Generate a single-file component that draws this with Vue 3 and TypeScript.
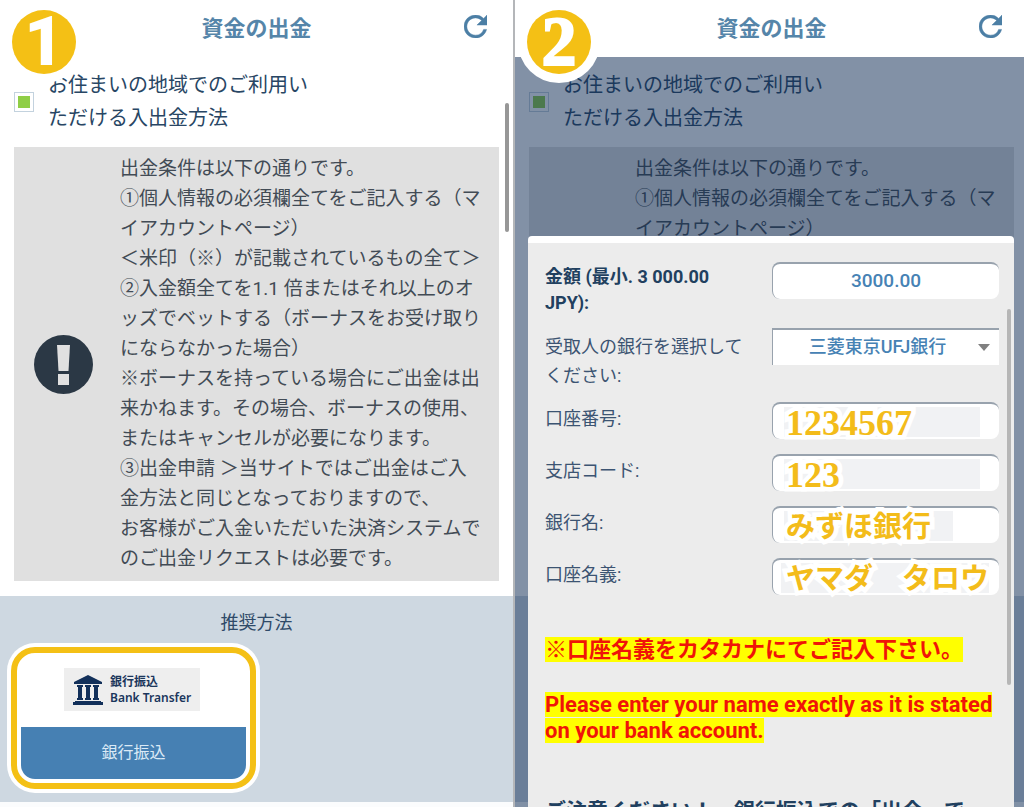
<script setup lang="ts">
import { ref } from 'vue'

interface Field {
  id: string
  label: string
  note: string
  digits: boolean
  maskStart: number
  maskWidth: number
}

const conditions: string[] = [
  '出金条件は以下の通りです。',
  '①個人情報の必須欄全てをご記入する（マ',
  'イアカウントページ）',
  '＜米印（※）が記載されているもの全て＞',
  '②入金額全てを1.1 倍またはそれ以上のオ',
  'ッズでベットする（ボーナスをお受け取り',
  'にならなかった場合）',
  '※ボーナスを持っている場合にご出金は出',
  '来かねます。その場合、ボーナスの使用、',
  'またはキャンセルが必要になります。',
  '③出金申請 ＞当サイトではご出金はご入',
  '金方法と同じとなっておりますので、',
  'お客様がご入金いただいた決済システムで',
  'のご出金リクエストは必要です。',
]

const screens = [
  { step: 1, dialog: false, lines: conditions },
  { step: 2, dialog: true, lines: conditions.slice(0, 3) },
]
const available = ref(true)
const amount = ref('3000.00')
const bank = ref('三菱東京UFJ銀行')

const fields: Field[] = [
  { id: 'account', label: '口座番号:', note: '1234567', digits: true, maskStart: 12, maskWidth: 196 },
  { id: 'branch', label: '支店コード:', note: '123', digits: true, maskStart: 12, maskWidth: 196 },
  { id: 'bankname', label: '銀行名:', note: 'みずほ銀行', digits: false, maskStart: 12, maskWidth: 169 },
  { id: 'holder', label: '口座名義:', note: 'ヤマダ　タロウ', digits: false, maskStart: 9, maskWidth: 208 },
]
</script>

<template>
  <main class="page">
    <section v-for="s in screens" :key="s.step" class="screen">
      <header class="bar">
        <h1>資金の出金</h1>
        <button class="reload" type="button" aria-label="更新">
          <svg viewBox="4 4 16 16" width="23" height="23" aria-hidden="true">
            <path fill="currentColor" stroke="currentColor" stroke-width="0.300" d="M17.65 6.35A7.958 7.958 0 0 0 12 4c-4.42 0-7.99 3.58-7.99 8s3.57 8 7.99 8c3.73 0 6.84-2.55 7.73-6h-2.08A5.99 5.99 0 0 1 12 18c-3.31 0-6-2.69-6-6s2.69-6 6-6c1.66 0 3.14.69 4.22 1.78L13 11h7V4z" />
          </svg>
        </button>
      </header>

      <div class="content">
        <div class="region">
          <input :id="'region' + s.step" v-model="available" type="checkbox" />
          <label :for="'region' + s.step">お住まいの地域でのご利用い<br />ただける入出金方法</label>
        </div>
        <div class="notice">
          <div class="alert">
            <svg v-if="!s.dialog" viewBox="0 0 59 59" width="59" height="59" aria-hidden="true">
              <circle cx="29.500" cy="29.500" r="29.500" fill="#2b3845" />
              <path d="M23 10h13l-1.500 26h-10z" fill="#e0e0e0" />
              <path d="M24 39h11v11h-11z" fill="#e0e0e0" />
            </svg>
          </div>
          <p>
            <span v-for="line in s.lines" :key="line">{{ line }}</span>
          </p>
        </div>
      </div>

      <footer class="methods">
        <template v-if="!s.dialog">
          <h2>推奨方法</h2>
          <button class="method" type="button">
            <span class="brand">
              <svg viewBox="0 0 30 30" width="30" height="30" aria-hidden="true">
                <g fill="#12305a">
                  <path d="M15 0 29 7v2H1V7z" />
                  <path d="M4 10h6v2H9v11h1v2H4v-2h1V12H4z" />
                  <path d="M12 10h6v2h-1v11h1v2h-6v-2h1V12h-1z" />
                  <path d="M20 10h6v2h-1v11h1v2h-6v-2h1V12h-1z" />
                  <path d="M2 26h26v1h2v3H0v-3h2z" />
                </g>
              </svg>
              <span class="brand-text">
                <span>銀行振込</span>
                <span class="latin">Bank Transfer</span>
              </span>
            </span>
            <span class="method-name">銀行振込</span>
          </button>
        </template>
      </footer>

      <div v-if="!s.dialog" class="scroll page-scroll"></div>

      <div v-if="s.dialog" class="overlay">
        <form class="dialog" @submit.prevent>
          <div class="row">
            <label class="strong" for="amount">金額 (最小. 3 000.00 JPY):</label>
            <input id="amount" v-model="amount" class="control" type="text" />
          </div>
          <div class="row">
            <label class="wide" for="bank">受取人の銀行を選択してください:</label>
            <div class="cell">
              <select id="bank" v-model="bank" class="control">
                <option>三菱東京UFJ銀行</option>
              </select>
              <span class="arrow"></span>
            </div>
          </div>
          <div v-for="f in fields" :key="f.id" class="row">
            <label :for="f.id">{{ f.label }}</label>
            <div class="cell">
              <input :id="f.id" class="control" type="text" />
              <span class="mask" :style="{ left: f.maskStart + 'px', width: f.maskWidth + 'px' }"></span>
              <span class="note" :class="{ digits: f.digits }">{{ f.note }}</span>
            </div>
          </div>
          <p class="warn"><mark>※口座名義をカタカナにてご記入下さい。</mark></p>
          <p class="warn english"><mark>Please enter your name exactly as it is stated on your bank account.</mark></p>
          <p class="caution">ご注意ください！　銀行振込での「出金」で</p>
          <div class="scroll dialog-scroll"></div>
        </form>
      </div>

      <span class="badge" :class="{ serif: s.dialog }">{{ s.step }}</span>
    </section>
  </main>
</template>

<style>
body {
  margin: 0;
  overflow: hidden;
}
</style>

<style scoped>
* {
  box-sizing: border-box;
}
.page {
  display: grid;
  grid-template-columns: 1fr 1fr;
  width: calc(100% + 6px);
  min-height: 100vh;
  font-family: Roboto, "Noto Sans CJK JP", sans-serif;
  background: #fbfcfd;
}
.screen {
  position: relative;
  border-right: 2px solid #b4b6b9;
}
h1, h2, p {
  margin: 0;
}
button, input, select {
  font-family: inherit;
}
.bar {
  position: relative;
  display: flex;
  align-items: center;
  justify-content: center;
  height: 57px;
  background: #fff;
}
h1 {
  font-size: 22px;
  line-height: 30px;
  font-weight: 700;
  color: #5585a9;
}
.reload {
  position: absolute;
  top: 15px;
  right: 26px;
  padding: 0;
  border: 0;
  background: none;
  color: #4c7fa5;
  line-height: 0;
}
.content {
  padding: 12px 14px 15px;
  background: #fff;
}
.region {
  display: flex;
  align-items: center;
  gap: 14px;
  margin-bottom: 12px;
}
.region input {
  appearance: none;
  width: 20px;
  height: 20px;
  margin: 0;
  border: 1px solid #c3d2de;
  background: #fff;
}
.region input:checked {
  background: #8fce46;
  box-shadow: inset 0 0 0 3px #fff;
}
.region label {
  font-size: 20px;
  line-height: 33px;
  color: #284664;
}
.notice {
  display: flex;
  gap: 27px;
  min-height: 434px;
  padding: 7px 0 7px 20px;
  background: #e0e0e0;
}
.alert {
  display: flex;
  align-items: center;
  flex: none;
  width: 59px;
}
.notice p {
  font-size: 19px;
  line-height: 30px;
  color: #424b55;
  white-space: nowrap;
}
.notice p span {
  display: block;
}
.methods {
  display: flex;
  flex-direction: column;
  gap: 11px;
  min-height: 206px;
  padding: 14px 11px 13px;
  background: #ced8e1;
}
h2 {
  font-size: 18px;
  line-height: 26px;
  font-weight: 400;
  text-align: center;
  color: #2f4a68;
}
.method {
  display: flex;
  flex-direction: column;
  align-items: center;
  gap: 16px;
  width: 245px;
  padding: 15px 4px 4px;
  border: 6px solid #f4c015;
  border-radius: 24px;
  box-shadow: 0 0 0 4px #fff;
  background: #fff;
}
.brand {
  display: flex;
  align-items: center;
  gap: 7px;
  width: 136px;
  height: 43px;
  padding-left: 9px;
  margin-right: 3px;
  background: #eee;
}
.brand-text {
  display: flex;
  flex-direction: column;
  font-size: 12px;
  line-height: 15px;
  font-weight: 700;
  text-align: left;
  white-space: nowrap;
  color: #1b365c;
}
.latin {
  font-family: "Noto Sans", sans-serif;
  font-weight: 600;
}
.method-name {
  align-self: stretch;
  border-radius: 0 0 14px 14px;
  background: #4680b3;
  color: #dceaf6;
  font-size: 16px;
  line-height: 52px;
}
.scroll {
  position: absolute;
  width: 4px;
  border-radius: 2px;
  background: #979797;
}
.page-scroll {
  top: 103px;
  right: 4px;
  height: 129px;
}
.overlay {
  position: absolute;
  inset: 57px 0 0;
  padding: 179px 14px 0 13px;
  overflow: hidden;
  background: rgba(16, 45, 84, 0.52);
}
.dialog {
  position: relative;
  padding: 19px 15px 40px 17px;
  border-top: 7px solid #fff;
  border-radius: 4px;
  background: #ececec;
}
.row {
  display: grid;
  grid-template-columns: 1fr 227px;
  align-items: start;
  min-height: 40px;
  margin-bottom: 12px;
}
.row label {
  padding: 2px 26px 0 0;
  font-size: 18px;
  line-height: 29px;
  color: #3c5472;
}
.row .wide {
  padding: 4px 26px 0 0;
}
.row .strong {
  padding: 2px 60px 0 0;
  font-weight: 700;
  line-height: 26px;
  color: #21405f;
}
.cell {
  position: relative;
}
.control {
  display: block;
  width: 100%;
  height: 37px;
  padding: 0 0 2px;
  border: 0 solid #98a2ad;
  border-width: 2px 0 0 1px;
  border-radius: 8px;
  outline: 0;
  background: #fff;
  color: #4682b4;
  font-size: 19px;
  font-weight: 500;
  text-align: center;
}
select.control {
  appearance: none;
  padding-right: 17px;
  border-radius: 0;
  font-size: 18px;
  text-align-last: center;
}
.arrow {
  position: absolute;
  top: 16px;
  right: 9px;
  border: 6px solid transparent;
  border-top: 7px solid #808080;
  border-bottom: 0;
  pointer-events: none;
}
.mask {
  position: absolute;
  top: 5px;
  bottom: 2px;
  background: #f1f2f4;
}
.note {
  position: absolute;
  top: 2px;
  left: 14px;
  font-size: 29px;
  line-height: 38px;
  font-weight: 700;
  white-space: nowrap;
  color: #f3bc1a;
  -webkit-text-stroke: 9px #fff;
  paint-order: stroke fill;
  pointer-events: none;
}
.note.digits {
  font-family: "Liberation Serif", serif;
  font-size: 36px;
}
.warn {
  margin-top: 29px;
  font-size: 22px;
  line-height: 26px;
  font-weight: 700;
}
.row + .warn {
  margin-top: 39px;
}
.warn mark {
  background: #ff0;
  color: #f01408;
}
.caution {
  margin-top: 52px;
  font-size: 21px;
  line-height: 30px;
  font-weight: 700;
  white-space: nowrap;
  color: #21405f;
}
.dialog-scroll {
  top: 66px;
  right: 3px;
  height: 376px;
  background: #b6b6b6;
}
.badge {
  position: absolute;
  top: 10px;
  left: 12px;
  width: 64px;
  height: 64px;
  border-radius: 50%;
  box-shadow: 0 0 0 9px #fff;
  background: #f4c015;
  color: #fff;
  font-size: 68px;
  line-height: 64px;
  font-weight: 900;
  text-align: center;
}
.badge.serif {
  font-family: "Liberation Serif", serif;
  font-size: 70px;
  -webkit-text-stroke: 2px #fff;
}
</style>
